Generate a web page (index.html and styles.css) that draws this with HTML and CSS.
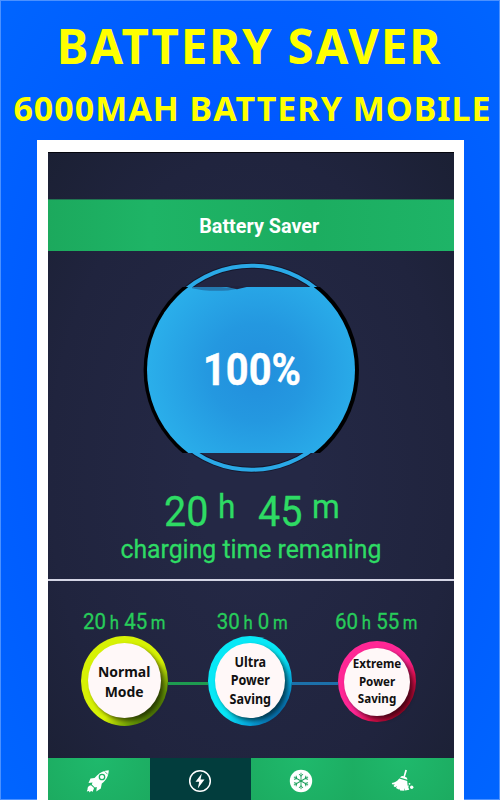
FILE: index.html
```
<!DOCTYPE html>
<html lang="en">
<head>
<meta charset="utf-8">
<title>Battery Saver</title>
<link rel="stylesheet" href="styles.css">
</head>
<body>
<main class="poster">
  <h1 class="headline"><span>BATTERY SAVER</span></h1>
  <h2 class="subhead"><span>6000MAH BATTERY MOBILE</span></h2>
  <section class="frame">
    <div class="phone">
      <div class="status"></div>
      <header class="appbar"><span>Battery Saver</span></header>
      <div class="gauge">
        <svg width="240" height="225" viewBox="130 255 240 225">
          <defs>
            <radialGradient id="water" gradientUnits="userSpaceOnUse" cx="257" cy="372" r="108">
              <stop offset="0" stop-color="#228edc"/><stop offset=".45" stop-color="#2498e0"/><stop offset="1" stop-color="#2aaeea"/>
            </radialGradient>
            <clipPath id="band"><rect x="130" y="287" width="240" height="166"/></clipPath>
          </defs>
          <circle cx="251.500" cy="367.700" r="102" fill="none" stroke="#15172c" stroke-width="6"/>
          <circle cx="251.500" cy="367.700" r="102" fill="none" stroke="#2aa9e7" stroke-width="4"/>
          <g clip-path="url(#band)">
            <circle cx="251.300" cy="370" r="107.700" fill="#000"/>
            <circle cx="251" cy="370" r="104" fill="url(#water)"/>
          </g>
          <path d="M192 287h29l17 1.800-10 1.600q-22 1.300-36-2.200z" fill="#2478ae"/>
          <path d="M222 286h29l-14 3.200z" fill="#20233e"/>
          <text class="percent" x="203" y="384.700" textLength="98" lengthAdjust="spacingAndGlyphs">100%</text>
        </svg>
      </div>
      <div class="remaining">
        <p class="clock"><b>20</b><i>h</i><b>45</b><i>m</i></p>
        <p class="caption"><span>charging time remaning</span></p>
      </div>
      <div class="modes">
        <div class="mode normal">
          <p class="time">20<small>h</small> 45<small>m</small></p>
          <div class="ring"><div class="disc"><span>Normal<br>Mode</span></div></div>
        </div>
        <div class="wire green"></div>
        <div class="mode ultra">
          <p class="time">30<small>h</small> 0<small>m</small></p>
          <div class="ring"><div class="disc"><span>Ultra<br>Power<br>Saving</span></div></div>
        </div>
        <div class="wire blue"></div>
        <div class="mode extreme">
          <p class="time">60<small>h</small> 55<small>m</small></p>
          <div class="ring"><div class="disc"><span>Extreme<br>Power<br>Saving</span></div></div>
        </div>
      </div>
      <nav class="tabs">
        <div class="tab"><svg width="24" height="24" viewBox="0 0 24 24">
          <path fill="#fff" d="M22.800 1.200C18 1.500 14.500 3 11 6.500L8.500 9 4.500 9.500 2.500 14l4-.500-.700 2 3 3 2-.500-.500 4.500 4.500-3 1-5C20.500 11 22.500 7 22.800 1.200zM5 16.200C2.500 16.500 1.200 18.500 1.600 20.200L.8 22.500 3 22l.5 1.500 1.500-1.500 2 .8C6.500 21 8.500 20.500 7.800 18.800z"/>
          <circle cx="16" cy="8" r="2.700" fill="#fff" stroke="#1db466" stroke-width="1.300"/><path d="M18.700 2.400l3 3" stroke="#1db466" stroke-width=".8"/>
        </svg></div>
        <div class="tab active"><svg width="24" height="24" viewBox="0 0 24 24">
          <circle cx="12" cy="12" r="10.300" fill="none" stroke="#fff" stroke-width="1.500"/><path d="M13.800 4.500L7.500 12.800h3.700L9.800 19.500l6.700-9h-4z" fill="#fff"/>
        </svg></div>
        <div class="tab"><svg width="24" height="24" viewBox="0 0 24 24">
          <circle cx="12" cy="12" r="11.200" fill="#fff"/>
          <g fill="none" stroke="#1b9e5b" stroke-width=".9">
            <path id="arm" d="M12 12V3.800M10 5l2 2.300L14 5"/>
            <use href="#arm" transform="rotate(60 12 12)"/><use href="#arm" transform="rotate(120 12 12)"/><use href="#arm" transform="rotate(180 12 12)"/><use href="#arm" transform="rotate(240 12 12)"/><use href="#arm" transform="rotate(300 12 12)"/>
          </g>
        </svg></div>
        <div class="tab"><svg width="24" height="24" viewBox="0 0 24 24">
          <path fill="#fff" d="M14.300.8l1.700.5-2 6.500q2.500.5 2.500 3l-7.500-2.300q2-2 3.500-1.200zM8.200 9.500l8 2.600q-.2 4.400 2 8.600l-4 .8-1-2.500.2 2.700-4.300-.3-.6-2-.2 1.300L5 19l1-2-2 1.300L2.500 17l1.300-1.800-2.300.3-.8-1.500C4 13.500 6.500 12 8.200 9.500z"/>
          <circle cx="20.700" cy="18.200" r="1.700" fill="#fff"/><circle cx="18.500" cy="14.800" r=".9" fill="#fff"/><circle cx="17.500" cy="17" r=".6" fill="#fff"/>
        </svg></div>
      </nav>
    </div>
  </section>
</main>
</body>
</html>
```
FILE: styles.css
```
* { box-sizing: border-box; }
body { margin: 0; }
h1, h2, p { margin: 0; }
.poster {
  width: 500px; height: 800px; overflow: hidden;
  display: flex; flex-direction: column; align-items: center;
  background: radial-gradient(ellipse at center, #0056ff 40%, #0065ff 100%);
  box-shadow: inset 0 0 0 1px #4b91ff;
  font-family: Roboto, sans-serif;
}
.headline, .subhead {
  font-family: "Noto Sans", sans-serif; font-weight: 700; color: #ff0;
  white-space: nowrap; display: flex; justify-content: center;
}
.headline { height: 78px; padding-top: 13px; font-size: 47.500px; line-height: 66px; letter-spacing: 1.750px; padding-right: 1px; }
.subhead { height: 61.500px; font-size: 34px; line-height: 61px; letter-spacing: 1px; padding-left: 5px; }
.frame { flex: 1; width: 427px; background: #fff; padding: 12.500px 10px 0 11px; margin-left: 1px; }
.phone {
  width: 406px; height: 648px; display: flex; flex-direction: column;
  background: radial-gradient(ellipse at center, #242845 20%, #20243e 70%, #1b2034 100%);
  box-shadow: inset 0 1px #05060e;
}
.status { height: 47px; }
.appbar {
  height: 52px; background: linear-gradient(90deg, #1ca95d, #1eb466 25%, #1cad60 65%, #1eb467);
  color: #fff; font-weight: 700; font-size: 20.500px; line-height: 52px; text-align: center;
  border-top: 1px solid #207451; padding-left: 16px;
}
.appbar span { display: inline-block; transform: scaleX(.965); }
.caption span { display: inline-block; transform: scaleX(.953); }
.gauge { height: 229px; padding: 4px 0 0 82px; }
.gauge svg { display: block; }
.percent { font: 700 45px Roboto, sans-serif; fill: #fff; stroke: #fff; stroke-width: .4px; }
.remaining { height: 101px; color: #2edb64; border-bottom: 2px solid #d4d5e5; }
.remaining, .time { -webkit-text-stroke: .3px currentColor; }
.clock { height: 56px; display: flex; padding: 4px 0 0 116px; }
.clock b { font-weight: 400; font-size: 42px; line-height: 55px; transform: scaleX(.94); transform-origin: left; width: 54px; }
.clock i { font-style: normal; font-size: 34px; line-height: 45px; transform: scaleX(.93); transform-origin: left; width: 40px; }
.caption { font-size: 26px; line-height: 26px; text-align: center; white-space: nowrap; }
.modes { height: 177px; display: flex; padding: 26px 0 0 33px; }
.mode { height: 150px; display: flex; flex-direction: column; align-items: center; flex: none; }
.time { height: 29px; color: #27cc5a; font-size: 22px; line-height: 30px; white-space: nowrap; transform: scaleX(.93); }
.time small { font-size: 18px; margin-left: 4px; }
.normal { width: 87px; }
.ultra { width: 84px; }
.extreme { width: 78px; }
.ultra .time { transform: translateX(2px) scaleX(.93); }
.extreme .time { transform: translateX(-1px) scaleX(.93); }
.ring { height: 90px; width: 100%; border-radius: 50%; padding: 7px; flex: none; }
.normal .ring { background: linear-gradient(135deg, #d7f205 60%, #6a9b05 78%, #213f04 95%); }
.ultra .ring { background: linear-gradient(135deg, #08e8f6 55%, #07a4dc 75%, #053a82 95%); }
.extreme .ring { height: 81px; margin-top: 5px; padding: 6.500px 6px; background: linear-gradient(135deg, #ff2795 55%, #e00f50 70%, #810014 92%); }
.disc {
  height: 75px; width: 100%; border-radius: 50%; background: #fff8f8; color: #111;
  display: flex; align-items: center; justify-content: center; text-align: center;
  font: 700 15px/20px "Noto Sans", sans-serif; box-shadow: 3px 3px 4px #0009;
}
.disc span { transform: scaleX(.93); }
.ultra .disc { font-size: 13.500px; line-height: 18.500px; }
.extreme .disc { height: 68px; font-size: 12.500px; line-height: 17.500px; }
.wire { height: 2.500px; width: 40px; margin-top: 75px; flex: none; background: #1e9b50; }
.wire.blue { width: 46px; background: #1c70aa; }
.tabs { height: 42px; display: grid; grid-template-columns: 102px 101px 102px 101px; }
.tab { display: flex; align-items: center; justify-content: center; padding: 3px 2px 0 0; background: radial-gradient(circle at top, #1fb96c, #1cab60); }
.tab.active { background: #023d3d; }
.tab svg { display: block; }
```
